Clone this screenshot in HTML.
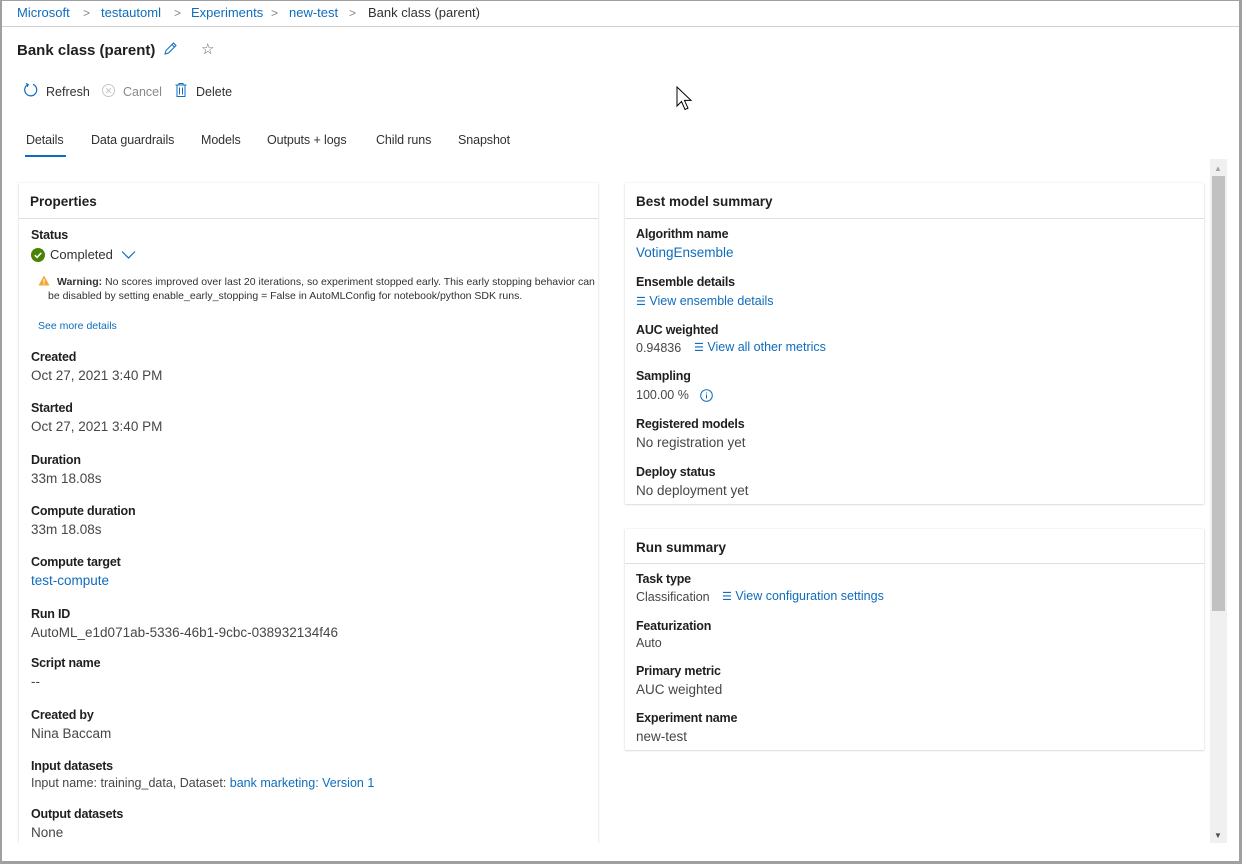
<!DOCTYPE html>
<html><head><meta charset="utf-8"><style>
*{margin:0;padding:0;box-sizing:border-box}
body{width:1242px;height:864px;position:relative;overflow:hidden;background:#fff;font-family:"Liberation Sans",sans-serif;color:#323130}
.t{position:absolute;white-space:nowrap;line-height:18px;height:18px;margin-top:1px}
.l{font-size:12.5px;font-weight:bold;color:#201f1e;letter-spacing:-0.2px}
.v{font-size:13.5px;color:#484644}
.a{color:#0f6cbd}
.card{position:absolute;background:#fff;box-shadow:0 0.5px 2px rgba(0,0,0,.22)}
.hd{position:absolute;left:0;right:0;top:0;height:36px;border-bottom:1px solid #e1dfdd}
.nav{font-size:13px;color:#0f6cbd}
.sep{font-size:12px;color:#8a8886}
.tab{font-size:12.5px;color:#323130;letter-spacing:-0.1px}
</style></head><body>
<div style="position:absolute;left:0;top:0;width:1242px;height:864px;border:2px solid #a0a0a0;border-top:1px solid #a0a0a0;border-bottom:3px solid #a0a0a0;border-right:3px solid #a0a0a0;z-index:5;pointer-events:none"></div>
<div style="position:absolute;left:0;top:26px;width:1242px;height:1px;background:#d2d0ce"></div>
<div class="t nav" style="left:17px;top:3px">Microsoft</div>
<div class="t sep" style="left:83px;top:3px">&gt;</div>
<div class="t nav" style="left:101px;top:3px">testautoml</div>
<div class="t sep" style="left:174px;top:3px">&gt;</div>
<div class="t nav" style="left:191px;top:3px">Experiments</div>
<div class="t sep" style="left:271px;top:3px">&gt;</div>
<div class="t nav" style="left:289px;top:3px">new-test</div>
<div class="t sep" style="left:349px;top:3px">&gt;</div>
<div class="t" style="left:368px;top:3px;font-size:13px">Bank class (parent)</div>

<div class="t" style="left:17px;top:40px;font-size:15px;font-weight:bold;color:#201f1e;height:20px;line-height:20px">Bank class (parent)</div>
<svg style="position:absolute;left:162px;top:41px" width="16" height="16" viewBox="0 0 16 16"><path d="M3 13l1-3.5 7.5-7.5 2.5 2.5-7.5 7.5zM10 3.5l2.5 2.5" fill="none" stroke="#0f6cbd" stroke-width="1"/></svg>
<div class="t" style="left:201px;top:40px;font-size:15px;color:#605e5c">☆</div>

<svg style="position:absolute;left:23px;top:82px" width="16" height="16" viewBox="0 0 16 16"><path d="M5 2.5A6 6 0 1 0 10 2.3" fill="none" stroke="#0f6cbd" stroke-width="1.2"/><path d="M3 1.5l2.2 1 -1 2.2" fill="none" stroke="#0f6cbd" stroke-width="1.2"/></svg>
<div class="t" style="left:46px;top:82px;font-size:12.5px">Refresh</div>
<svg style="position:absolute;left:101px;top:83px" width="15" height="15" viewBox="0 0 15 15"><circle cx="7.5" cy="7.5" r="6" fill="none" stroke="#c8c6c4"/><path d="M5 5l5 5M10 5l-5 5" stroke="#c8c6c4"/></svg>
<div class="t" style="left:123px;top:82px;font-size:12.5px;color:#8a8886">Cancel</div>
<svg style="position:absolute;left:174px;top:82px" width="14" height="16" viewBox="0 0 14 16"><path d="M1.5 3h11M5 3V1.5h4V3M3 3v11.5h8V3M5.5 5.5v7M8.5 5.5v7" fill="none" stroke="#0f6cbd" stroke-width="1"/></svg>
<div class="t" style="left:196px;top:82px;font-size:12.5px">Delete</div>

<div class="t tab" style="left:26px;top:130px">Details</div>
<div style="position:absolute;left:25px;top:155px;width:41px;height:2px;background:#0f6cbd"></div>
<div class="t tab" style="left:91px;top:130px">Data guardrails</div>
<div class="t tab" style="left:201px;top:130px">Models</div>
<div class="t tab" style="left:267px;top:130px">Outputs + logs</div>
<div class="t tab" style="left:376px;top:130px">Child runs</div>
<div class="t tab" style="left:458px;top:130px">Snapshot</div>

<svg style="position:absolute;left:676px;top:86px" width="18" height="26" viewBox="0 0 18 26"><path d="M1 1v19l4.5-4.5 3.5 8 3-1.3-3.5-7.8h6.5z" fill="#fff" stroke="#000" stroke-width="1"/></svg>

<div style="position:absolute;left:1210px;top:159px;width:17px;height:684px;background:#f0f0f0"></div>
<div style="position:absolute;left:1212px;top:176px;width:13px;height:435px;background:#c1c1c1"></div>
<div class="t" style="left:1214px;top:159px;font-size:8px;color:#a3a3a3">▲</div>
<div class="t" style="left:1214px;top:826px;font-size:8px;color:#505050">▼</div>

<div class="card" style="left:19px;top:183px;width:579px;height:680px;overflow:hidden">
<div class="hd"></div>
</div>
<div style="position:absolute;left:0;top:843px;width:1242px;height:21px;background:#fff;z-index:2"></div>
<div class="t" style="left:30px;top:192px;font-size:13.5px;font-weight:bold;color:#201f1e">Properties</div>
<div class="t l" style="left:31px;top:225px">Status</div>
<svg style="position:absolute;left:31px;top:248px" width="14" height="14" viewBox="0 0 14 14"><circle cx="7" cy="7" r="7" fill="#498205"/><path d="M3.8 7.2l2.2 2.2 4.3-4.5" fill="none" stroke="#fff" stroke-width="1.5"/></svg>
<div class="t" style="left:50px;top:245px;font-size:13px">Completed</div>
<svg style="position:absolute;left:121px;top:250px" width="15" height="10" viewBox="0 0 15 10"><path d="M1 1.5l6.5 6.5 6.5-6.5" fill="none" stroke="#0f6cbd" stroke-width="1.2"/></svg>
<svg style="position:absolute;left:38px;top:275px" width="12" height="11" viewBox="0 0 12 11"><path d="M6 0.5l5.5 10H0.5z" fill="#f2a73b"/><path d="M6 4v3.5M6 8.5v1" stroke="#fff" stroke-width="1.1"/></svg>
<div class="t" style="left:57px;top:272px;font-size:10.5px;color:#323130;width:541px;overflow:hidden"><b>Warning:</b> No scores improved over last 20 iterations, so experiment stopped early. This early stopping behavior can</div>
<div class="t" style="left:48px;top:286px;font-size:10.5px;color:#323130">be disabled by setting enable_early_stopping = False in AutoMLConfig for notebook/python SDK runs.</div>
<div class="t a" style="left:38px;top:316px;font-size:10.5px">See more details</div>

<div class="t l" style="left:31px;top:347px">Created</div><div class="t v" style="left:31px;top:366px">Oct 27, 2021 3:40 PM</div>
<div class="t l" style="left:31px;top:398px">Started</div><div class="t v" style="left:31px;top:417px">Oct 27, 2021 3:40 PM</div>
<div class="t l" style="left:31px;top:450px">Duration</div><div class="t v" style="left:31px;top:469px">33m 18.08s</div>
<div class="t l" style="left:31px;top:501px">Compute duration</div><div class="t v" style="left:31px;top:520px">33m 18.08s</div>
<div class="t l" style="left:31px;top:552px">Compute target</div><div class="t v a" style="left:31px;top:571px">test-compute</div>
<div class="t l" style="left:31px;top:604px">Run ID</div><div class="t v" style="left:31px;top:623px">AutoML_e1d071ab-5336-46b1-9cbc-038932134f46</div>
<div class="t l" style="left:31px;top:653px">Script name</div><div class="t v" style="left:31px;top:672px">--</div>
<div class="t l" style="left:31px;top:705px">Created by</div><div class="t v" style="left:31px;top:724px">Nina Baccam</div>
<div class="t l" style="left:31px;top:756px">Input datasets</div><div class="t" style="left:31px;top:773px;font-size:12.5px;color:#484644">Input name: training_data, Dataset: <span class="a">bank marketing: Version 1</span></div>
<div class="t l" style="left:31px;top:804px">Output datasets</div><div class="t v" style="left:31px;top:823px">None</div>

<div class="card" style="left:625px;top:183px;width:579px;height:321px"><div class="hd"></div></div>
<div class="t" style="left:636px;top:192px;font-size:13.5px;font-weight:bold;color:#201f1e">Best model summary</div>
<div class="t l" style="left:636px;top:224px">Algorithm name</div><div class="t v a" style="left:636px;top:243px">VotingEnsemble</div>
<div class="t l" style="left:636px;top:272px">Ensemble details</div>
<div class="t a" style="left:636px;top:291px;font-size:12.5px"><span style="font-size:11px">☰</span> View ensemble details</div>
<div class="t l" style="left:636px;top:320px">AUC weighted</div>
<div class="t" style="left:636px;top:338px;font-size:12.5px;color:#484644">0.94836</div>
<div class="t a" style="left:694px;top:337px;font-size:12.5px"><span style="font-size:11px">☰</span> View all other metrics</div>
<div class="t l" style="left:636px;top:366px">Sampling</div>
<div class="t" style="left:636px;top:385px;font-size:12.5px;color:#484644">100.00 %</div>
<svg style="position:absolute;left:700px;top:389px" width="13" height="13" viewBox="0 0 13 13"><circle cx="6.5" cy="6.5" r="5.8" fill="none" stroke="#0f6cbd"/><path d="M6.5 5.5v4M6.5 3.5v1" stroke="#0f6cbd"/></svg>
<div class="t l" style="left:636px;top:414px">Registered models</div><div class="t v" style="left:636px;top:433px">No registration yet</div>
<div class="t l" style="left:636px;top:462px">Deploy status</div><div class="t v" style="left:636px;top:481px">No deployment yet</div>

<div class="card" style="left:625px;top:529px;width:579px;height:221px"><div class="hd" style="height:35px"></div></div>
<div class="t" style="left:636px;top:538px;font-size:13.5px;font-weight:bold;color:#201f1e">Run summary</div>
<div class="t l" style="left:636px;top:569px">Task type</div>
<div class="t" style="left:636px;top:587px;font-size:12.5px;color:#484644">Classification</div>
<div class="t a" style="left:722px;top:586px;font-size:12.5px"><span style="font-size:11px">☰</span> View configuration settings</div>
<div class="t l" style="left:636px;top:616px">Featurization</div><div class="t" style="left:636px;top:633px;font-size:12.5px;color:#484644">Auto</div>
<div class="t l" style="left:636px;top:661px">Primary metric</div><div class="t v" style="left:636px;top:680px">AUC weighted</div>
<div class="t l" style="left:636px;top:708px">Experiment name</div><div class="t v" style="left:636px;top:727px">new-test</div>
</body></html>
